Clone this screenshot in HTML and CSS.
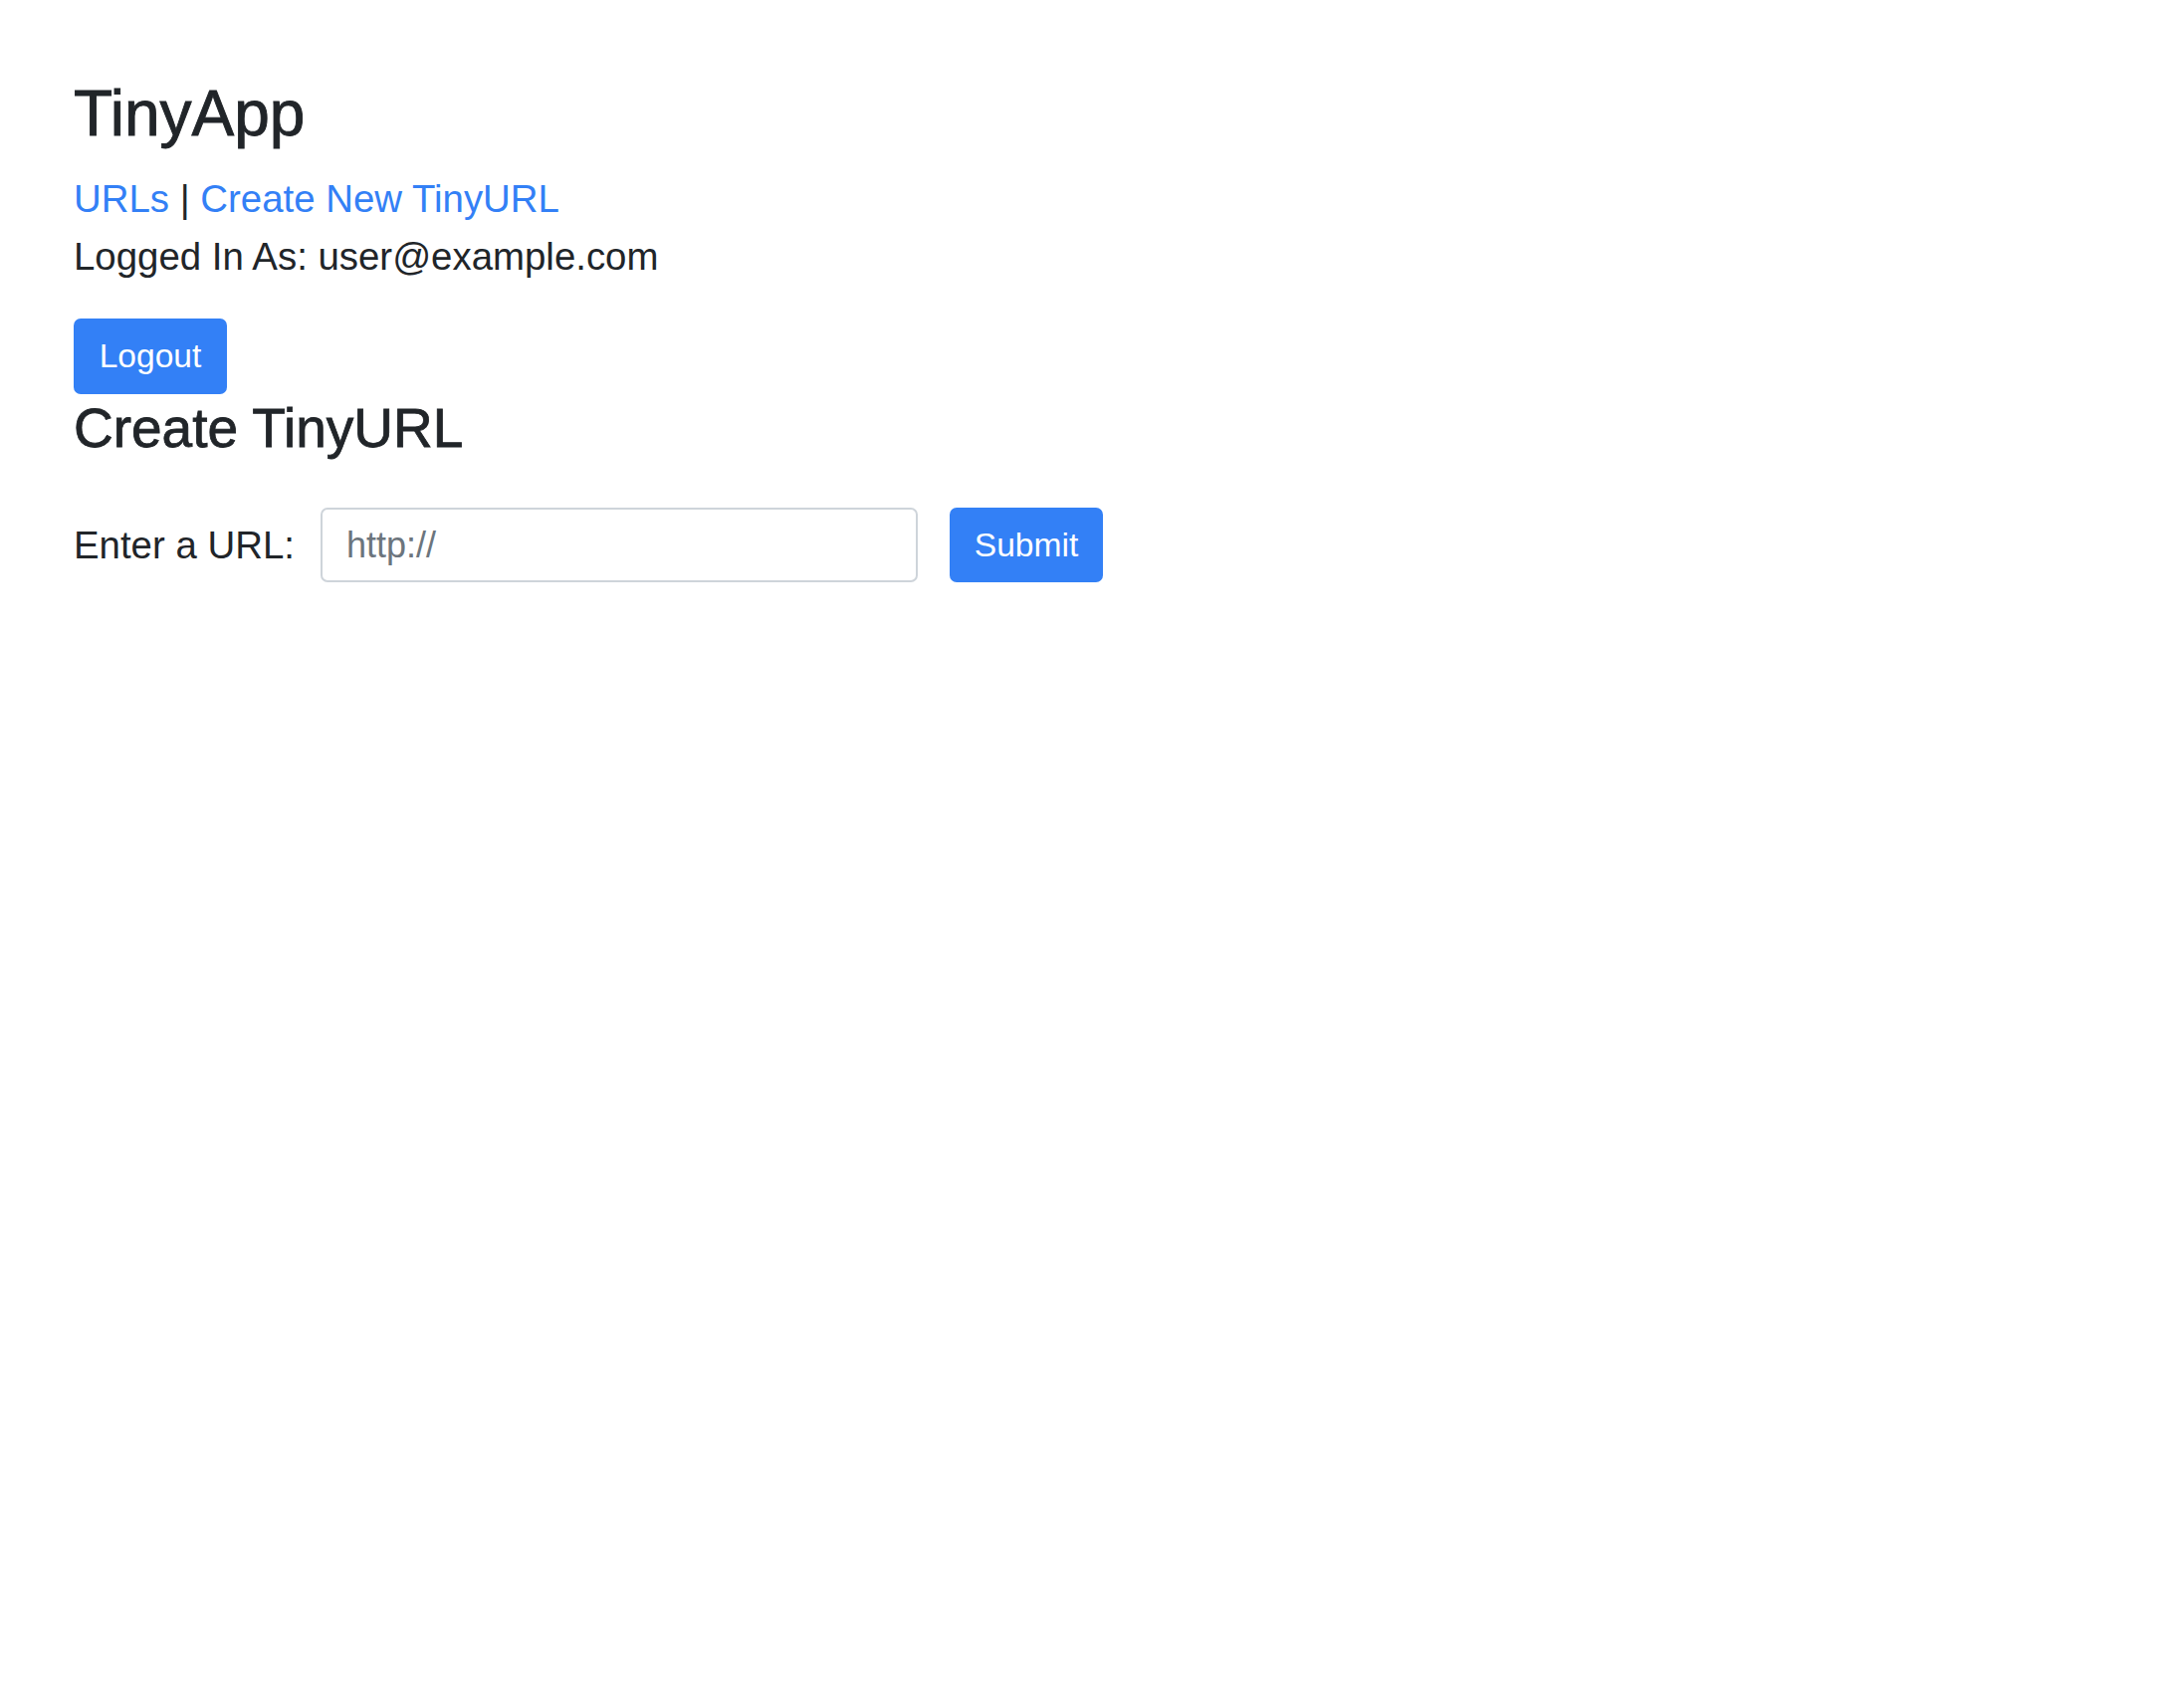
FILE: index.html
```html
<!DOCTYPE html>
<html lang="en">
<head>
<meta charset="utf-8">
<title>TinyApp</title>
<link rel="stylesheet" href="styles.css">
</head>
<body>
<main class="page">
  <header class="header">
    <h1 class="brand">TinyApp</h1>
    <nav class="nav"><a class="link" href="#">URLs</a> | <a class="link" href="#">Create New TinyURL</a></nav>
    <p class="user">Logged In As: user@example.com</p>
    <form class="logout-form"><button class="btn btn-logout" type="button">Logout</button></form>
  </header>
  <h2 class="title">Create TinyURL</h2>
  <form class="url-form">
    <label class="url-label" for="longURL">Enter a URL:</label>
    <input class="url-input" id="longURL" type="text" placeholder="http://">
    <button class="btn btn-submit" type="button">Submit</button>
  </form>
</main>
</body>
</html>
```

FILE: styles.css
```css
html, body {
  margin: 0;
  padding: 0;
  background: #ffffff;
}

body {
  font-family: "Liberation Sans", Arial, sans-serif;
  color: #212529;
  font-size: 38.4px;
  line-height: 57.6px;
}

.page {
  padding: 76px 74px 0 74px;
}

.brand {
  margin: 0 0 18.5px 0;
  font-size: 64px;
  line-height: 76.8px;
  font-weight: 400;
  color: #212529;
  -webkit-text-stroke: 0.9px #212529;
}

.nav {
  margin: 0;
}

.link {
  color: #3380f6;
  text-decoration: none;
}

.user {
  margin: 0 0 33.5px 0;
}

.logout-form {
  margin: 0;
  display: flex;
}

.btn {
  font-family: "Liberation Sans", Arial, sans-serif;
  font-size: 33.6px;
  line-height: 50.4px;
  color: #ffffff;
  background: #3380f6;
  border: 0;
  border-radius: 7px;
  padding: 12.8px 25px;
  cursor: pointer;
}

.btn-logout {
  width: 154px;
  height: 76px;
}

.title {
  margin: 1px 0 47.5px 0;
  font-size: 55px;
  line-height: 66px;
  font-weight: 400;
  color: #212529;
  -webkit-text-stroke: 0.8px #212529;
}

.url-form {
  display: flex;
  align-items: center;
  height: 75px;
}

.url-label {
  width: 248px;
  flex: none;
}

.url-input {
  box-sizing: border-box;
  width: 600px;
  height: 75px;
  border: 2.4px solid #ced4da;
  border-radius: 7px;
  padding: 0 24px;
  font-family: "Liberation Sans", Arial, sans-serif;
  font-size: 36px;
  color: #495057;
  background: #ffffff;
  margin-right: 32px;
  outline: none;
}

.url-input::placeholder {
  color: #6c757d;
}

.btn-submit {
  width: 154px;
  height: 75px;
  padding: 0;
}
```
